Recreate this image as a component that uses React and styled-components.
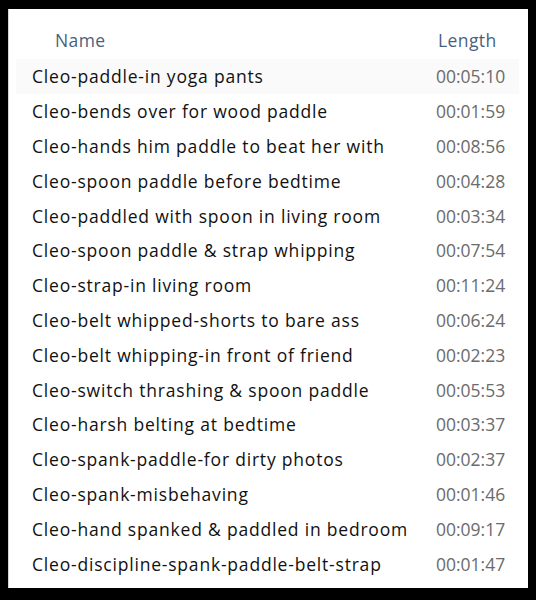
import React from "react";
import styled, { createGlobalStyle } from "styled-components";

const Global = createGlobalStyle`
  html, body { margin: 0; padding: 0; background: #000; }
  body { font-family: "Open Sans", "Noto Sans", sans-serif; }
`;

const Frame = styled.div`
  width: 536px;
  height: 600px;
  box-sizing: border-box;
  padding: 9px 8px 12px 8px;
  background: #000;
`;

const Panel = styled.div`
  height: 100%;
  background: #fff;
  border-left: 1px solid #d4d4d4;
  box-sizing: border-box;
  display: flex;
  flex-direction: column;
`;

const Grid = styled.div`
  display: grid;
  grid-template-columns: 404px 1fr;
  margin: 0 9px 0 7px;
  padding-left: 16px;
  box-sizing: border-box;
`;

const Header = styled(Grid)`
  height: 50px;
  align-items: center;
  padding-top: 12px;
  color: #4b5f7c;
  font-size: 17.5px;
  letter-spacing: 0.4px;
`;

const HeaderCell = styled.div`
  padding-left: ${(p) => p.$indent || 0}px;
`;

const Row = styled(Grid)`
  height: 34.8px;
  align-items: center;
  font-size: 17.5px;
  background: ${(p) => (p.$shade ? "#fafafa" : "transparent")};
`;

const NameCell = styled.div`
  color: #111;
  white-space: nowrap;
  letter-spacing: 0.8px;
`;

const LengthCell = styled.div`
  color: #6b6b6b;
  white-space: nowrap;
`;

const rows = [
  ["Cleo-paddle-in yoga pants", "00:05:10"],
  ["Cleo-bends over for wood paddle", "00:01:59"],
  ["Cleo-hands him paddle to beat her with", "00:08:56"],
  ["Cleo-spoon paddle before bedtime", "00:04:28"],
  ["Cleo-paddled with spoon in living room", "00:03:34"],
  ["Cleo-spoon paddle & strap whipping", "00:07:54"],
  ["Cleo-strap-in living room", "00:11:24"],
  ["Cleo-belt whipped-shorts to bare ass", "00:06:24"],
  ["Cleo-belt whipping-in front of friend", "00:02:23"],
  ["Cleo-switch thrashing & spoon paddle", "00:05:53"],
  ["Cleo-harsh belting at bedtime", "00:03:37"],
  ["Cleo-spank-paddle-for dirty photos", "00:02:37"],
  ["Cleo-spank-misbehaving", "00:01:46"],
  ["Cleo-hand spanked & paddled in bedroom", "00:09:17"],
  ["Cleo-discipline-spank-paddle-belt-strap", "00:01:47"],
];

export default function App() {
  return (
    <>
      <Global />
      <Frame>
        <Panel>
          <Header>
            <HeaderCell $indent={23}>Name</HeaderCell>
            <HeaderCell $indent={2}>Length</HeaderCell>
          </Header>
          {rows.map(([name, len], i) => (
            <Row key={i} $shade={i === 0}>
              <NameCell>{name}</NameCell>
              <LengthCell>{len}</LengthCell>
            </Row>
          ))}
        </Panel>
      </Frame>
    </>
  );
}
